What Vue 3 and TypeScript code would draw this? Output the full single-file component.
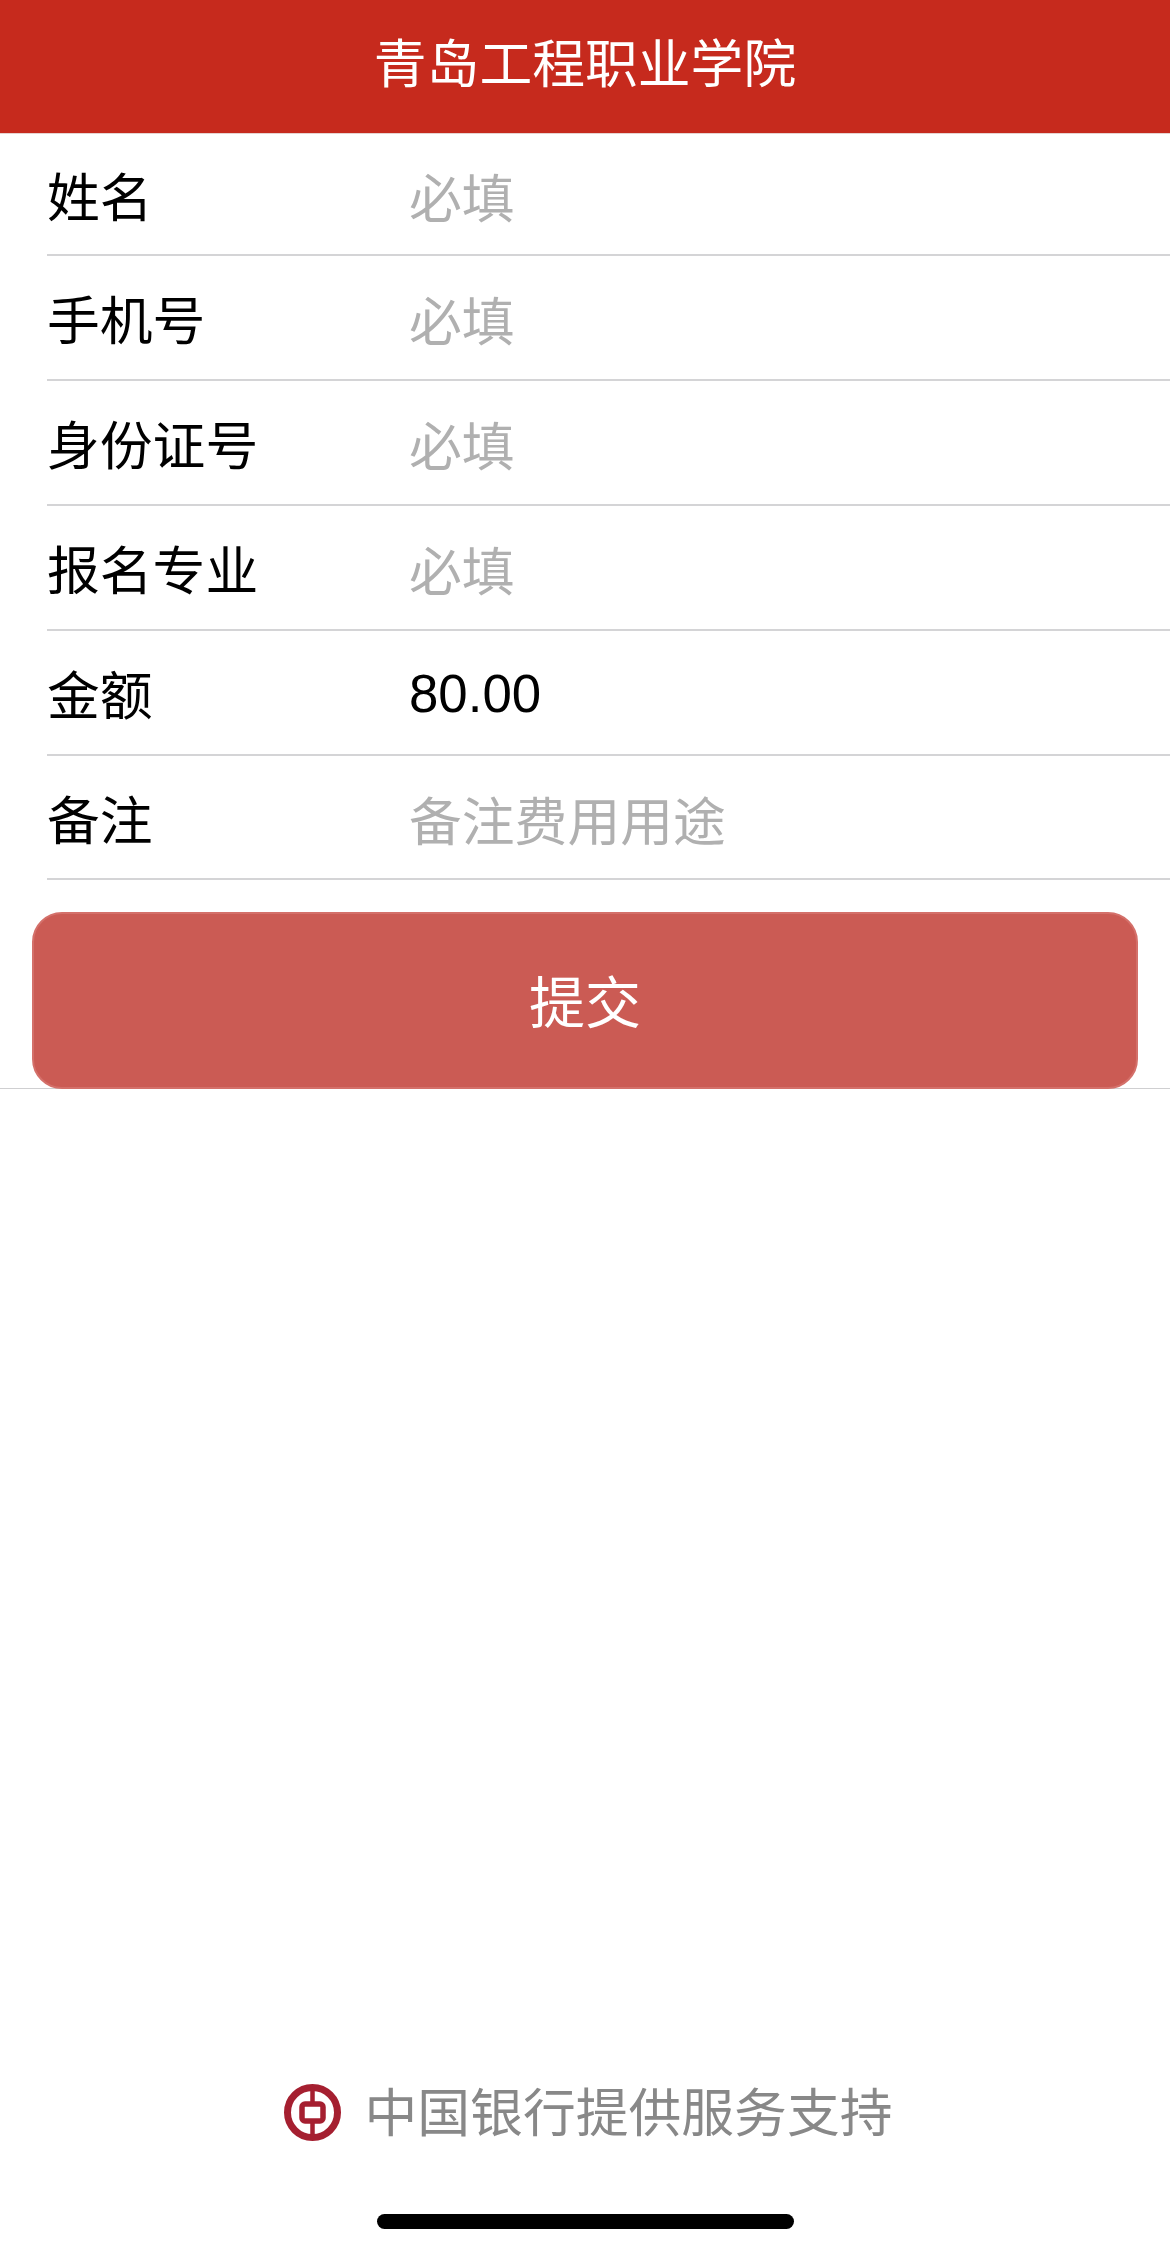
<template>
  <div class="page">
    <header class="title-bar">青岛工程职业学院</header>

    <section class="form">
      <div v-for="field in fields" :key="field.label" class="row">
        <span class="label">{{ field.label }}</span>
        <span class="value" :class="{ placeholder: field.isPlaceholder }">{{ field.text }}</span>
      </div>
      <button type="button" class="submit">提交</button>
    </section>

    <footer class="support">
      <svg class="logo" viewBox="0 0 57 57" aria-hidden="true">
        <circle cx="28.5" cy="28.5" r="25" fill="none" stroke="#a51f30" stroke-width="7" />
        <path d="M28.5 3v17M28.5 37v17" stroke="#a51f30" stroke-width="4.5" fill="none" />
        <rect x="18" y="20" width="21" height="17" rx="3" fill="none" stroke="#a51f30" stroke-width="5.5" />
      </svg>
      <span>中国银行提供服务支持</span>
    </footer>

    <div class="home-bar"></div>
  </div>
</template>

<script setup lang="ts">
interface Field {
  label: string
  text: string
  isPlaceholder: boolean
}

const fields: Field[] = [
  { label: '姓名', text: '必填', isPlaceholder: true },
  { label: '手机号', text: '必填', isPlaceholder: true },
  { label: '身份证号', text: '必填', isPlaceholder: true },
  { label: '报名专业', text: '必填', isPlaceholder: true },
  { label: '金额', text: '80.00', isPlaceholder: false },
  { label: '备注', text: '备注费用用途', isPlaceholder: true }
]
</script>

<style>
html,
body {
  margin: 0;
  background: #fff;
}
</style>

<style scoped>
.page {
  display: flex;
  flex-direction: column;
  height: 2251px;
  overflow: hidden;
  background: #fff;
  font-family: "Liberation Sans", "Noto Sans CJK SC", sans-serif;
  font-size: 52.8px;
  color: #000;
}

.title-bar {
  height: 133px;
  line-height: 130px;
  text-align: center;
  color: #fff;
  background: #c62a1d;
  border-bottom: 1px solid #e6d3d0;
}

.form {
  display: flex;
  flex-direction: column;
  height: 954px;
  border-bottom: 1px solid #cfcfd1;
}

.row {
  display: flex;
  align-items: center;
  flex: none;
  height: 122.9px;
  margin-left: 47px;
  border-bottom: 2px solid #d4d4d6;
}

.row:first-child {
  height: 120px;
}

.label {
  width: 362px;
  flex: none;
}

.value {
  position: relative;
  top: 1px;
}

.placeholder {
  color: #b0b0b0;
}

.submit {
  flex: none;
  height: 177px;
  margin: 32px 32px 0;
  padding: 0 0 5px;
  border: 2px solid #d4706a;
  border-radius: 30px;
  background: #cb5b54;
  color: #fff;
  font: inherit;
  font-size: 56px;
}

.support {
  display: flex;
  align-items: center;
  justify-content: center;
  gap: 24px;
  margin-top: auto;
  margin-bottom: 67px;
  padding-left: 6px;
  color: #888;
}

.logo {
  width: 57px;
  height: 57px;
  flex: none;
  margin-top: 6px;
}

.home-bar {
  flex: none;
  align-self: center;
  width: 417px;
  height: 15px;
  margin-bottom: 22px;
  border-radius: 8px;
  background: #000;
}
</style>
